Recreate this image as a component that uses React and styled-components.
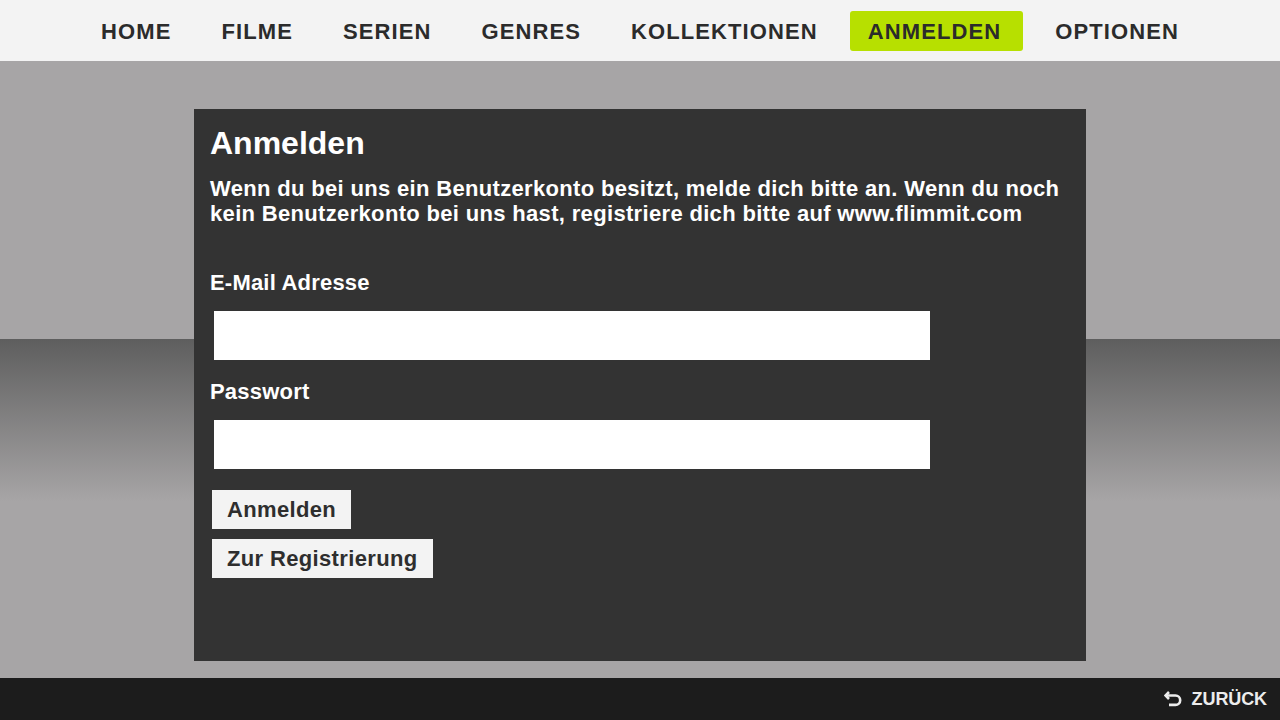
import styled, { createGlobalStyle } from "styled-components";

const GlobalStyle = createGlobalStyle`
    html, body {
        margin: 0;
        padding: 0;
        background: #a7a5a6;
        font-family: 'Liberation Sans', Arial, sans-serif;
    }
    * {
        box-sizing: border-box;
    }
`;

const navItems = ["HOME", "FILME", "SERIEN", "GENRES", "KOLLEKTIONEN", "ANMELDEN", "OPTIONEN"];

const BackIcon = () => (
    <svg width="19" height="16" viewBox="0 0 19 16" fill="none">
        <path d="M5 1 L1.5 4.5 L5 8" stroke="#ececec" strokeWidth="2.6" strokeLinejoin="miter" />
        <path d="M2 4.5 H11.5 a4.7 4.7 0 0 1 0 9.4 H5" stroke="#ececec" strokeWidth="2.6" />
    </svg>
);

const App = () => {
    return (
        <>
            <GlobalStyle />
            <Page>
                <NavBar>
                    {navItems.map((item) => (
                        <NavItem key={item} $active={item === "ANMELDEN"}>
                            {item}
                        </NavItem>
                    ))}
                </NavBar>
                <Main>
                    <Panel>
                        <Title>Anmelden</Title>
                        <Intro>
                            Wenn du bei uns ein Benutzerkonto besitzt, melde dich bitte an. Wenn du noch kein Benutzerkonto bei uns hast, registriere dich bitte auf www.flimmit.com
                        </Intro>
                        <Form>
                            <Label>E-Mail Adresse</Label>
                            <Input type="text" />
                            <Label>Passwort</Label>
                            <Input type="password" />
                            <Buttons>
                                <Button>Anmelden</Button>
                                <Button>Zur Registrierung</Button>
                            </Buttons>
                        </Form>
                    </Panel>
                </Main>
                <Footer>
                    <BackButton>
                        <BackIcon />
                        ZURÜCK
                    </BackButton>
                </Footer>
            </Page>
        </>
    );
};

const Page = styled.div`
    width: 1280px;
    height: 720px;
    display: flex;
    flex-direction: column;
    overflow: hidden;
`;

const NavBar = styled.div`
    height: 61px;
    flex-shrink: 0;
    background-color: #f3f3f3;
    display: flex;
    justify-content: center;
    align-items: center;
    gap: 14px;
    padding-top: 1px;
`;

const NavItem = styled.div`
    height: 40px;
    padding: 2px ${(props) => (props.$active ? "22px" : "18px")} 0 18px;
    display: flex;
    align-items: center;
    font-size: 22px;
    font-weight: 700;
    letter-spacing: 1.1px;
    color: #2b2b2b;
    border-radius: 3px;
    background-color: ${(props) => (props.$active ? "#b7e000" : "transparent")};
`;

const Main = styled.div`
    flex: 1;
    display: flex;
    justify-content: center;
    padding-top: 48px;
    background: linear-gradient(
        to bottom,
        #a7a5a6 0px,
        #a7a5a6 278px,
        #5e5e5e 278px,
        #a7a5a6 440px,
        #a7a5a6 100%
    );
`;

const Panel = styled.div`
    width: 892px;
    height: 552px;
    background-color: #333333;
    padding: 14px 16px;
    color: #ffffff;
`;

const Title = styled.h1`
    margin: 0;
    font-size: 32px;
    font-weight: 700;
    line-height: 40px;
`;

const Intro = styled.p`
    margin: 13px 0 0;
    font-size: 22px;
    font-weight: 700;
    letter-spacing: 0.33px;
    line-height: 25px;
`;

const Form = styled.div`
    margin-top: 44px;
    display: flex;
    flex-direction: column;
`;

const Label = styled.div`
    font-size: 22px;
    font-weight: 700;
    letter-spacing: 0.2px;
    line-height: 26px;
    margin-bottom: 15px;
`;

const Input = styled.input`
    width: 716px;
    height: 49px;
    margin: 0 0 19px 4px;
    border: none;
    outline: none;
    background: #ffffff;
    font-size: 20px;
`;

const Buttons = styled.div`
    display: flex;
    flex-direction: column;
    align-items: flex-start;
    gap: 10px;
    margin: 2px 0 0 2px;
`;

const Button = styled.button`
    height: 39px;
    padding: 0 15px;
    border: none;
    background-color: #f3f3f3;
    color: #2e2e2e;
    font-family: 'Liberation Sans', Arial, sans-serif;
    font-size: 22px;
    font-weight: 700;
    letter-spacing: 0.35px;
`;

const Footer = styled.div`
    height: 42px;
    flex-shrink: 0;
    background-color: #1c1c1c;
    display: flex;
    justify-content: flex-end;
    align-items: center;
    padding-right: 13px;
`;

const BackButton = styled.div`
    display: flex;
    align-items: center;
    gap: 9px;
    color: #ececec;
    font-size: 18px;
    font-weight: 700;
    letter-spacing: -0.1px;
`;

export default App;
